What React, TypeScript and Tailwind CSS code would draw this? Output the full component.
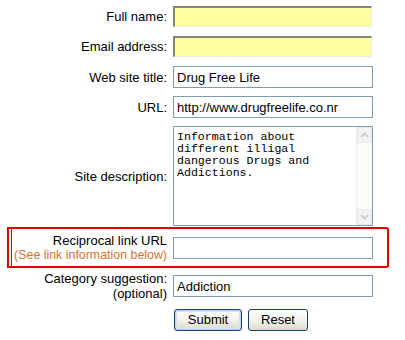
import React from "react";

const font = { fontFamily: '"Liberation Sans", Arial, sans-serif' };

function Label({ children }: { children: React.ReactNode }) {
  return (
    <div className="flex w-[167px] shrink-0 flex-col items-end whitespace-nowrap text-right text-[13px] text-black">
      {children}
    </div>
  );
}

function YellowInput() {
  return (
    <div className="h-[21px] w-[199px] border-t-2 border-l-2 border-r border-b border-t-[#858575] border-l-[#858575] border-r-[#eeeed8] border-b-[#eeeed8] bg-[#ffffa0]" />
  );
}

function GrayInput({ value }: { value?: string }) {
  return (
    <div className="flex h-[22px] w-[200px] shrink-0 items-center border border-[#7f9db9] bg-white pl-[3px] text-[13px] text-black">
      {value}
    </div>
  );
}

function Chevron({ up }: { up?: boolean }) {
  return (
    <svg width="9" height="6" viewBox="0 0 9 6">
      <path
        d={up ? "M1 5 L4.5 1.5 L8 5" : "M1 1 L4.5 4.5 L8 1"}
        fill="none"
        stroke="#c4c9cf"
        strokeWidth="1.6"
      />
    </svg>
  );
}

function XPButton({ label, def }: { label: string; def?: boolean }) {
  return (
    <div
      className={
        "flex h-[22px] items-center justify-center rounded-[3px] border border-[#1c3f73] bg-gradient-to-b from-white via-[#f3f3ee] to-[#dcd9cc] text-[13px] text-black " +
        (def ? "w-[68px] shadow-[inset_0_0_0_1px_#bcd0ee,inset_0_0_0_2px_#d4e2f5]" : "w-[60px]")
      }
    >
      {label}
    </div>
  );
}

export default function App() {
  return (
    <div className="h-[340px] w-[405px] overflow-hidden bg-white pt-[6px]" style={font}>
      <div className="flex flex-col">
        <div className="flex h-[21px] items-center gap-[6px] leading-[15px]">
          <Label>Full name:</Label>
          <YellowInput />
        </div>
        <div className="mt-[9px] flex h-[21px] items-center gap-[6px] leading-[15px]">
          <Label>Email address:</Label>
          <YellowInput />
        </div>
        <div className="mt-[9px] flex items-center gap-[6px] leading-[15px]">
          <Label>Web site title:</Label>
          <GrayInput value="Drug Free Life" />
        </div>
        <div className="mt-[8px] flex items-center gap-[6px] leading-[15px]">
          <Label>URL:</Label>
          <GrayInput value="http://www.drugfreelife.co.nr" />
        </div>
        <div className="mt-[8px] flex items-center gap-[6px] leading-[15px]">
          <Label>Site description:</Label>
          <div className="flex h-[100px] w-[200px] border border-[#7f9db9] bg-white">
            <div
              className="flex-1 whitespace-pre pl-[3px] pt-[4px] text-[11.6px] leading-[12px] text-black"
              style={{ fontFamily: '"Liberation Mono", "DejaVu Sans Mono", monospace' }}
            >
              {"Information about\ndifferent illigal\ndangerous Drugs and\nAddictions."}
            </div>
            <div className="flex w-[16px] flex-col justify-between border-l border-[#eeede6] bg-[#fbfbf8]">
              <div className="flex h-[16px] items-center justify-center rounded-[2px] border border-[#e4e6ea] bg-[#f1f2f2]">
                <Chevron up />
              </div>
              <div className="flex h-[16px] items-center justify-center rounded-[2px] border border-[#e4e6ea] bg-[#f1f2f2]">
                <Chevron />
              </div>
            </div>
          </div>
        </div>
        <div className="relative mt-[8px] flex h-[28px] items-center gap-[6px] leading-[14px]">
          <Label>
            <div>Reciprocal link URL</div>
            <div className="text-[12.4px] text-[#d8732f]">(See link information below)</div>
          </Label>
          <GrayInput />
          <div className="pointer-events-none absolute left-[7px] top-[-7px] h-[41px] w-[382px] rounded-tr-[3px] rounded-br-[3px] border-2 border-[#e00000]" />
          <div className="pointer-events-none absolute left-[11px] top-[-5px] h-[37px] w-px bg-[#e00000]" />
        </div>
        <div className="mt-[9px] flex h-[30px] items-center gap-[6px] leading-[15px]">
          <Label>
            <div>Category suggestion:</div>
            <div>(optional)</div>
          </Label>
          <GrayInput value="Addiction" />
        </div>
        <div className="mt-[8px] flex items-center gap-[6px]">
          <div className="w-[167px] shrink-0" />
          <div className="ml-px flex gap-[6px]">
            <XPButton label="Submit" def />
            <XPButton label="Reset" />
          </div>
        </div>
      </div>
    </div>
  );
}
